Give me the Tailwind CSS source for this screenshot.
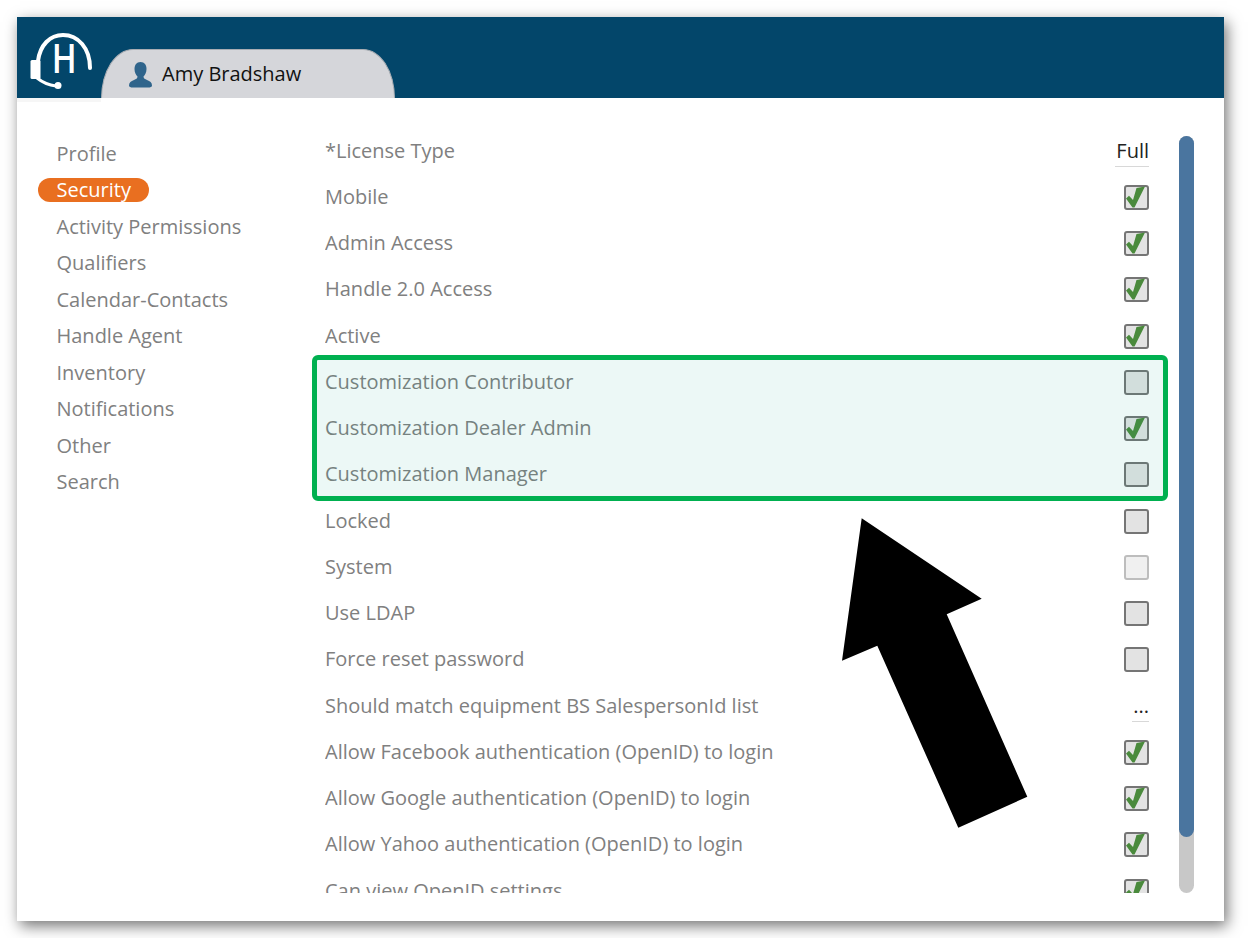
<!DOCTYPE html>
<html lang="en">
<head>
    <meta charset="UTF-8">
    <meta name="viewport" content="width=device-width, initial-scale=1.0">
    <title>Amy Bradshaw - Security</title>
    <script src="https://cdn.jsdelivr.net/npm/@tailwindcss/browser@4"></script>
</head>
<body class="bg-white font-['Open_Sans',sans-serif] text-[20px] text-[#808080]">
    <svg class="hidden">
        <symbol id="tick" viewBox="0 0 25 25">
            <polygon points="2,13.5 5,10.8 9,15 12.5,3 21,1.5 10.5,22.5 8.5,22.5" fill="#4a8a3c"/>
        </symbol>
    </svg>

    <div class="p-[17px]">
        <div class="relative w-[1207px] h-[904px] bg-white shadow-[3px_5px_14px_rgba(0,0,0,0.55)]">
            <!-- Header -->
            <header class="flex items-end h-[81px] bg-[#03466a]">
                <svg class="w-[84px] h-[81px] shrink-0" viewBox="17 17 84 81">
                    <path d="M38 61C40 45 50 35 63 35C78 35 90 48 90 68" fill="none" stroke="#fff" stroke-width="4" stroke-linecap="round"/>
                    <rect x="30.500" y="60" width="10" height="19" rx="1.500" fill="#fff"/>
                    <path d="M37 78C42 82 48 85 56 86" fill="none" stroke="#fff" stroke-width="3"/>
                    <circle cx="58" cy="85.500" r="3.500" fill="#fff"/>
                    <text transform="translate(51.700 73) scale(0.85 1)" font-size="39" font-weight="600" fill="#fff">H</text>
                </svg>
                <div class="flex items-center w-[294px] h-[49px] pl-[27px] gap-[10px] bg-[#d5d6da] border-t border-x border-[#a9adb3] rounded-tl-[32px_49px] rounded-tr-[32px_49px] text-[#111]">
                    <svg class="w-[23px] h-[26px] mt-[1px]" viewBox="0 0 23 26" fill="#2f648b">
                        <path d="M11.500 0C15.500 0 17.500 3 17.500 7C17.500 10.500 16 13 14.500 14.500C14.500 16.500 16 17 18 18C21 19.300 23 20.500 23 23.500C23 25 21.500 25.500 19 25.500H4C1.500 25.500 0 25 0 23.500C0 20.500 2 19.300 5 18C7 17 8.500 16.500 8.500 14.500C7 13 5.500 10.500 5.500 7C5.500 3 7.500 0 11.500 0Z"/>
                    </svg>
                    <span>Amy Bradshaw</span>
                </div>
            </header>
            <div class="w-[84px] h-[4px] bg-[#f6f6f6]"></div>

            <div class="flex pt-[26px]">
                <!-- Sidebar -->
                <nav class="w-[308px] shrink-0 pt-[7.7px] pl-[21px]">
                    <a class="flex items-center h-[36.5px] pl-[18.5px]">Profile</a>
                    <a class="flex items-center h-[36.5px]"><span class="flex items-center h-[24px] pl-[18.5px] pr-[18px] rounded-full bg-[#e96f20] text-white">Security</span></a>
                    <a class="flex items-center h-[36.5px] pl-[18.5px]">Activity Permissions</a>
                    <a class="flex items-center h-[36.5px] pl-[18.5px]">Qualifiers</a>
                    <a class="flex items-center h-[36.5px] pl-[18.5px]">Calendar-Contacts</a>
                    <a class="flex items-center h-[36.5px] pl-[18.5px]">Handle Agent</a>
                    <a class="flex items-center h-[36.5px] pl-[18.5px]">Inventory</a>
                    <a class="flex items-center h-[36.5px] pl-[18.5px]">Notifications</a>
                    <a class="flex items-center h-[36.5px] pl-[18.5px]">Other</a>
                    <a class="flex items-center h-[36.5px] pl-[18.5px]">Search</a>
                </nav>

                <!-- Settings list -->
                <div class="w-[824px] h-[765px] shrink-0 overflow-hidden">
                    <div class="flex items-center justify-between h-[46.25px]"><span class="-mt-[1px]">*License Type</span><span class="mt-[0.5px] pl-[1px] border-b border-[#d8d8d8] text-[#222]">Full</span></div>
                    <div class="flex items-center justify-between h-[46.25px]"><span class="-mt-[1px]">Mobile</span><span class="w-[25px] h-[25px] border-2 border-[#757575] rounded-[3px] bg-[#e3e3e3]"><svg class="w-[25px] h-[25px] -m-[2px]"><use href="#tick"/></svg></span></div>
                    <div class="flex items-center justify-between h-[46.25px]"><span class="-mt-[1px]">Admin Access</span><span class="w-[25px] h-[25px] border-2 border-[#757575] rounded-[3px] bg-[#e3e3e3]"><svg class="w-[25px] h-[25px] -m-[2px]"><use href="#tick"/></svg></span></div>
                    <div class="flex items-center justify-between h-[46.25px]"><span class="-mt-[1px]">Handle 2.0 Access</span><span class="w-[25px] h-[25px] border-2 border-[#757575] rounded-[3px] bg-[#e3e3e3]"><svg class="w-[25px] h-[25px] -m-[2px]"><use href="#tick"/></svg></span></div>
                    <div class="flex items-center justify-between h-[46.25px]"><span class="-mt-[1px]">Active</span><span class="w-[25px] h-[25px] border-2 border-[#757575] rounded-[3px] bg-[#e3e3e3]"><svg class="w-[25px] h-[25px] -m-[2px]"><use href="#tick"/></svg></span></div>
                    <div class="flex items-center justify-between h-[46.25px]"><span class="-mt-[1px]">Customization Contributor</span><span class="w-[25px] h-[25px] border-2 border-[#757575] rounded-[3px] bg-[#e3e3e3]"></span></div>
                    <div class="flex items-center justify-between h-[46.25px]"><span class="-mt-[1px]">Customization Dealer Admin</span><span class="w-[25px] h-[25px] border-2 border-[#757575] rounded-[3px] bg-[#e3e3e3]"><svg class="w-[25px] h-[25px] -m-[2px]"><use href="#tick"/></svg></span></div>
                    <div class="flex items-center justify-between h-[46.25px]"><span class="-mt-[1px]">Customization Manager</span><span class="w-[25px] h-[25px] border-2 border-[#757575] rounded-[3px] bg-[#e3e3e3]"></span></div>
                    <div class="flex items-center justify-between h-[46.25px]"><span class="-mt-[1px]">Locked</span><span class="w-[25px] h-[25px] border-2 border-[#757575] rounded-[3px] bg-[#e3e3e3]"></span></div>
                    <div class="flex items-center justify-between h-[46.25px]"><span class="-mt-[1px]">System</span><span class="w-[25px] h-[25px] border-2 border-[#bdbdbd] rounded-[3px] bg-[#f0f0f0]"></span></div>
                    <div class="flex items-center justify-between h-[46.25px]"><span class="-mt-[1px]">Use LDAP</span><span class="w-[25px] h-[25px] border-2 border-[#757575] rounded-[3px] bg-[#e3e3e3]"></span></div>
                    <div class="flex items-center justify-between h-[46.25px]"><span class="-mt-[1px]">Force reset password</span><span class="w-[25px] h-[25px] border-2 border-[#757575] rounded-[3px] bg-[#e3e3e3]"></span></div>
                    <div class="flex items-center justify-between h-[46.25px]"><span class="-mt-[1px]">Should match equipment BS SalespersonId list</span><span class="mt-[0.5px] pl-[1px] border-b border-[#d8d8d8] text-[#222]">...</span></div>
                    <div class="flex items-center justify-between h-[46.25px]"><span class="-mt-[1px]">Allow Facebook authentication (OpenID) to login</span><span class="w-[25px] h-[25px] border-2 border-[#757575] rounded-[3px] bg-[#e3e3e3]"><svg class="w-[25px] h-[25px] -m-[2px]"><use href="#tick"/></svg></span></div>
                    <div class="flex items-center justify-between h-[46.25px]"><span class="-mt-[1px]">Allow Google authentication (OpenID) to login</span><span class="w-[25px] h-[25px] border-2 border-[#757575] rounded-[3px] bg-[#e3e3e3]"><svg class="w-[25px] h-[25px] -m-[2px]"><use href="#tick"/></svg></span></div>
                    <div class="flex items-center justify-between h-[46.25px]"><span class="-mt-[1px]">Allow Yahoo authentication (OpenID) to login</span><span class="w-[25px] h-[25px] border-2 border-[#757575] rounded-[3px] bg-[#e3e3e3]"><svg class="w-[25px] h-[25px] -m-[2px]"><use href="#tick"/></svg></span></div>
                    <div class="flex items-center justify-between h-[46.25px]"><span class="-mt-[1px]">Can view OpenID settings</span><span class="w-[25px] h-[25px] border-2 border-[#757575] rounded-[3px] bg-[#e3e3e3]"><svg class="w-[25px] h-[25px] -m-[2px]"><use href="#tick"/></svg></span></div>
                </div>

                <!-- Scrollbar -->
                <div class="w-[15px] h-[757px] mt-[8px] ml-[30px] rounded-full bg-[#c8c8c8]">
                    <div class="h-[701px] rounded-full bg-[#4a759f]"></div>
                </div>
            </div>

            <!-- Annotation: highlight box and arrow -->
            <div class="absolute left-[295px] top-[338px] w-[856px] h-[146px] border-[5px] border-[#00b050] rounded-[6px] bg-[#00a088]/[0.075]"></div>
            <svg class="absolute left-[800px] top-[480px] w-[250px] h-[360px]" viewBox="817 497 250 360">
                <polygon points="861.700,518.300 981.700,598.700 946.700,614.300 1027.300,796.700 958.300,827.700 877.300,645.700 842,660.700" fill="#000"/>
            </svg>
        </div>
    </div>
</body>
</html>
